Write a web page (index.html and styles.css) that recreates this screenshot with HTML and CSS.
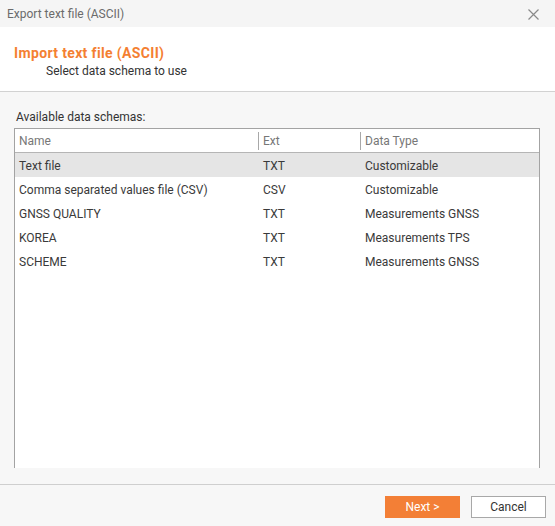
FILE: index.html
```html
<!DOCTYPE html>
<html lang="en">
<head>
    <meta charset="UTF-8">
    <title>Export text file (ASCII)</title>
    <link rel="stylesheet" href="styles.css">
</head>
<body>
    <div class="dialog">
        <div class="titlebar">
            <span>Export text file (ASCII)</span>
            <svg class="close" width="11" height="11" viewBox="0 0 11 11">
                <path d="M0.5 0.5 L10.5 10.5 M10.5 0.5 L0.5 10.5" stroke="#8a8a8a" stroke-width="1.2" fill="none"/>
            </svg>
        </div>
        <div class="header">
            <h1>Import text file (ASCII)</h1>
            <div class="subtitle">Select data schema to use</div>
        </div>
        <div class="content">
            <div class="label">Available data schemas:</div>
            <div class="grid">
                <table>
                    <thead>
                        <tr>
                            <th class="col-name">Name</th>
                            <th class="col-ext"><span class="sep">Ext</span></th>
                            <th><span class="sep">Data Type</span></th>
                        </tr>
                    </thead>
                    <tbody>
                        <tr class="selected"><td>Text file</td><td>TXT</td><td>Customizable</td></tr>
                        <tr><td>Comma separated values file (CSV)</td><td>CSV</td><td>Customizable</td></tr>
                        <tr><td>GNSS QUALITY</td><td>TXT</td><td>Measurements GNSS</td></tr>
                        <tr><td>KOREA</td><td>TXT</td><td>Measurements TPS</td></tr>
                        <tr><td>SCHEME</td><td>TXT</td><td>Measurements GNSS</td></tr>
                    </tbody>
                </table>
            </div>
        </div>
        <div class="footer">
            <button class="btn primary">Next &gt;</button>
            <button class="btn">Cancel</button>
        </div>
    </div>
</body>
</html>
```

FILE: styles.css
```css
body {
    margin: 0;
    font-family: Roboto, "Liberation Sans", sans-serif;
    font-size: 12px;
    color: #3a3a3a;
}
.dialog {
    width: 555px;
    height: 526px;
    display: flex;
    flex-direction: column;
    background: #f7f7f7;
}
.titlebar {
    height: 27px;
    display: flex;
    align-items: center;
    justify-content: space-between;
    padding: 0 16px 0 7px;
    background: #f5f5f5;
    color: #6b6b6b;
}
.close {
    margin-top: 1px;
}
.header {
    height: 65px;
    background: white;
    border-bottom: 1px solid #d2d2d2;
    box-sizing: border-box;
    padding: 17px 0 0 14px;
}
.header h1 {
    margin: 0;
    font-size: 14px;
    font-weight: bold;
    letter-spacing: 0.35px;
    color: #f47f32;
    line-height: 18px;
}
.subtitle {
    margin: 1px 0 0 32px;
    line-height: 16px;
    color: #333;
}
.content {
    flex: 1;
    display: flex;
    flex-direction: column;
    padding: 17px 15px 16px 14px;
}
.label {
    margin-left: 2px;
    line-height: 16px;
    margin-bottom: 3px;
    color: #333;
}
.grid {
    flex: 1;
    background: white;
    border: 1px solid #a3a3a3;
    border-bottom: none;
}
table {
    width: 100%;
    border-collapse: collapse;
    table-layout: fixed;
}
th {
    height: 23px;
    padding: 0;
    text-align: left;
    font-weight: normal;
    color: #777;
    border-bottom: 1px solid #b5b5b5;
}
.col-name {
    width: 239px;
    padding-left: 4px;
}
.col-ext {
    width: 102px;
}
.sep {
    display: block;
    border-left: 1px solid #a8a8a8;
    padding-left: 4px;
    line-height: 18px;
}
td {
    height: 23px;
    padding: 1px 0 0 4px;
    line-height: 16px;
    color: #3a3a3a;
    white-space: nowrap;
}
td + td {
    padding-left: 5px;
}
.selected td {
    background: #e5e5e5;
}
.footer {
    height: 42px;
    border-top: 1px solid #cfcfcf;
    box-sizing: border-box;
    display: flex;
    justify-content: flex-end;
    align-items: flex-start;
    gap: 11px;
    padding: 11px 9px 0 0;
}
.btn {
    width: 75px;
    height: 22px;
    font-family: Roboto, "Liberation Sans", sans-serif;
    font-size: 12px;
    border: 1px solid #a8a8a8;
    background: white;
    color: #333;
    padding: 0;
}
.btn.primary {
    background: #f37f36;
    border-color: #f37f36;
    color: white;
}
```
